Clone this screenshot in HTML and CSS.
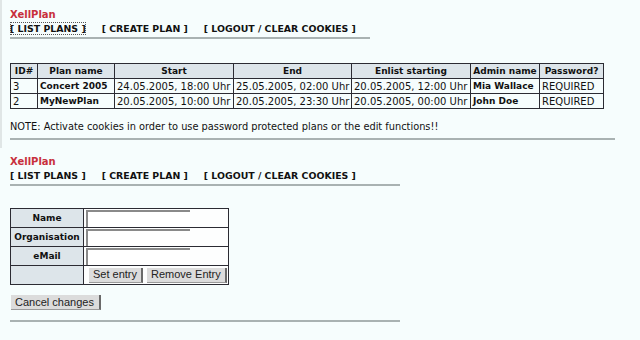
FILE: index.html
```html
<!DOCTYPE html>
<html>
<head>
<meta charset="utf-8">
<link rel="stylesheet" href="styles.css">
</head>
<body>
<div class="frame top">
  <div class="brand">XellPlan</div>
  <nav class="nav">
    <a class="navlink current">[ LIST PLANS ]</a>
    <a class="navlink">[ CREATE PLAN ]</a>
    <a class="navlink">[ LOGOUT / CLEAR COOKIES ]</a>
  </nav>
  <hr class="rule short">
  <table class="grid plans">
    <colgroup>
      <col class="c-id"><col class="c-name"><col class="c-start"><col class="c-end"><col class="c-enl"><col class="c-admin"><col class="c-pw">
    </colgroup>
    <tr>
      <th>ID#</th>
      <th>Plan name</th>
      <th>Start</th>
      <th>End</th>
      <th>Enlist starting</th>
      <th>Admin name</th>
      <th>Password?</th>
    </tr>
    <tr>
      <td>3</td>
      <td class="b">Concert 2005</td>
      <td>24.05.2005, 18:00 Uhr</td>
      <td>25.05.2005, 02:00 Uhr</td>
      <td>20.05.2005, 12:00 Uhr</td>
      <td class="b">Mia Wallace</td>
      <td>REQUIRED</td>
    </tr>
    <tr>
      <td>2</td>
      <td class="b">MyNewPlan</td>
      <td>20.05.2005, 10:00 Uhr</td>
      <td>20.05.2005, 23:30 Uhr</td>
      <td>20.05.2005, 00:00 Uhr</td>
      <td class="b">John Doe</td>
      <td>REQUIRED</td>
    </tr>
  </table>
  <p class="note">NOTE: Activate cookies in order to use password protected plans or the edit functions!!</p>
  <hr class="rule long">
</div>
<div class="frame bottom">
  <div class="brand">XellPlan</div>
  <nav class="nav">
    <a class="navlink">[ LIST PLANS ]</a>
    <a class="navlink">[ CREATE PLAN ]</a>
    <a class="navlink">[ LOGOUT / CLEAR COOKIES ]</a>
  </nav>
  <hr class="rule mid">
  <table class="grid form">
    <colgroup><col class="c-lab"><col class="c-fld"></colgroup>
    <tr><th class="lab">Name</th><td class="fld"><input class="inp" type="text"></td></tr>
    <tr><th class="lab">Organisation</th><td class="fld"><input class="inp" type="text"></td></tr>
    <tr><th class="lab">eMail</th><td class="fld"><input class="inp" type="text"></td></tr>
    <tr><th class="lab"></th><td class="fld"><div class="btns"><button class="btn">Set entry</button><button class="btn">Remove Entry</button></div></td></tr>
  </table>
  <button class="btn cancel">Cancel changes</button>
  <hr class="rule mid end">
</div>
</body>
</html>
```
FILE: styles.css
```css
html, body {
  margin: 0;
  padding: 0;
  background: #f6fdfd;
  font-family: "DejaVu Sans", Verdana, sans-serif;
  font-size: 10px;
  color: #111;
}
.frame {
  padding: 0 0 0 10px;
  box-sizing: border-box;
}
.top {
  border-left: 2px solid #e0e6e6;
  padding-left: 8px;
  padding-top: 9px;
  height: 148px;
}
.bottom {
  padding-top: 8px;
}
.brand {
  color: #c8303c;
  font-weight: bold;
  font-size: 10px;
  line-height: 12px;
  height: 12px;
}
.nav {
  display: flex;
  gap: 16px;
  line-height: 13px;
  margin-top: 1px;
}
.navlink {
  color: #111;
  font-weight: bold;
  font-size: 9.4px;
}
.current {
  outline: 1px dotted #555;
  outline-offset: -1px;
}
.rule {
  border: 0;
  height: 2px;
  background: #a9b2b2;
  margin: 2px 0 0 0;
}
.short { width: 360px; }
.long { width: 605px; margin-top: 6px; }
.mid { width: 390px; }
.grid {
  border-collapse: collapse;
  table-layout: fixed;
  font-size: 10px;
}
.grid th, .grid td {
  border: 1px solid #2b2b33;
  padding: 0 2px;
  height: 14px;
  line-height: 13px;
  white-space: nowrap;
  overflow: hidden;
}
.grid th {
  background: #dde5ea;
  font-weight: bold;
  font-size: 9px;
  text-align: center;
}
.plans {
  margin-top: 24px;
  width: 593px;
}
.c-id { width: 27px; }
.c-name { width: 77px; }
.c-start { width: 119px; }
.c-end { width: 118px; }
.c-enl { width: 119px; }
.c-admin { width: 69px; }
.c-pw { width: 64px; }
.grid td.b { font-weight: bold; font-size: 9px; }
.note {
  margin: 12px 0 0 0;
  font-size: 9.8px;
  line-height: 11px;
}
.form {
  margin-top: 22px;
  width: 218px;
}
.c-lab { width: 73px; }
.c-fld { width: 145px; }
.form th.lab {
  height: 18px;
  padding: 0 1px;
}
.form td.fld {
  background: #fdfefe;
  padding: 0 2px;
  height: 18px;
}
.inp {
  width: 104px;
  height: 17px;
  box-sizing: border-box;
  border: 0;
  border-top: 2px solid #8a8a8a;
  border-left: 2px solid #8a8a8a;
  background: #fff;
  padding: 0;
  margin: 0;
  display: block;
}
.btns {
  display: flex;
  gap: 4px;
  align-items: center;
  padding-left: 3px;
}
.btn {
  font-family: "Liberation Sans", Arial, sans-serif;
  font-size: 11px;
  height: 15px;
  line-height: 13px;
  padding: 0 4px;
  margin: 0;
  background: #dcdcdc;
  border: 0;
  border-right: 2px solid #6a6a6a;
  border-bottom: 1px solid #9a9a9a;
  color: #222;
}
.cancel {
  display: block;
  margin: 10px 0 0 1px;
  padding: 0 5px 0 4px;
}
.end { margin-top: 10px; }
```
